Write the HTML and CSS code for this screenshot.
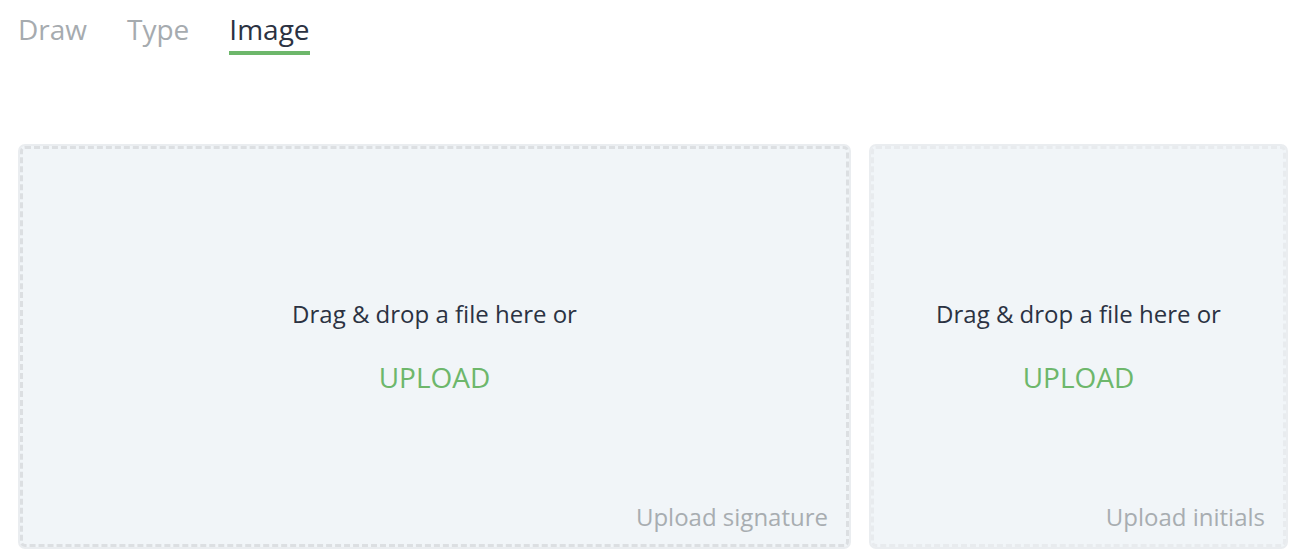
FILE: index.html
```html
<!DOCTYPE html>
<html>
<head>
<meta charset="utf-8">
<link rel="stylesheet" href="styles.css">
</head>
<body>
<div class="page">
  <nav class="tabs">
    <span class="tab">Draw</span>
    <span class="tab">Type</span>
    <span class="tab active">Image</span>
  </nav>
  <div class="zones">
    <div class="zone zone-main">
      <div class="zone-inner">
        <div class="prompt">Drag &amp; drop a file here or</div>
        <div class="upload">UPLOAD</div>
        <div class="caption">Upload signature</div>
      </div>
    </div>
    <div class="zone zone-side">
      <div class="zone-inner faint">
        <div class="prompt">Drag &amp; drop a file here or</div>
        <div class="upload">UPLOAD</div>
        <div class="caption">Upload initials</div>
      </div>
    </div>
  </div>
</div>
</body>
</html>
```

FILE: styles.css
```css
html, body {
  margin: 0;
  padding: 0;
  background: #ffffff;
  font-family: "Open Sans", "Noto Sans", sans-serif;
}
.page {
  padding: 0 12px 0 18px;
}
.tabs {
  display: flex;
  gap: 40px;
  padding-top: 9px;
  height: 144px;
  box-sizing: border-box;
}
.tab {
  font-size: 28px;
  color: #a6abaf;
  line-height: 40px;
  height: 46px;
  box-sizing: border-box;
}
.tab.active {
  color: #2b3242;
  border-bottom: 4px solid #6db76b;
}
.zones {
  display: flex;
  gap: 18px;
}
.zone {
  height: 405px;
  border: 2px solid #eaedf0;
  border-radius: 7px;
  background: #f1f5f8;
  box-sizing: border-box;
}
.zone-main { width: 833px; }
.zone-side { width: 419px; }
.zone-inner {
  position: relative;
  height: 100%;
  border: 3px dashed #dcdfe2;
  border-radius: 5px;
  box-sizing: border-box;
  display: flex;
  flex-direction: column;
  align-items: center;
  padding-top: 149px;
}
.zone-inner.faint {
  border-color: #e8ebee;
}
.prompt {
  font-size: 24px;
  color: #2b3242;
  line-height: 32px;
}
.upload {
  margin-top: 28px;
  font-size: 28px;
  color: #6db76b;
  line-height: 38px;
}
.caption {
  position: absolute;
  right: 18px;
  bottom: 11px;
  font-size: 24px;
  color: #a8adb1;
  line-height: 32px;
}
```
